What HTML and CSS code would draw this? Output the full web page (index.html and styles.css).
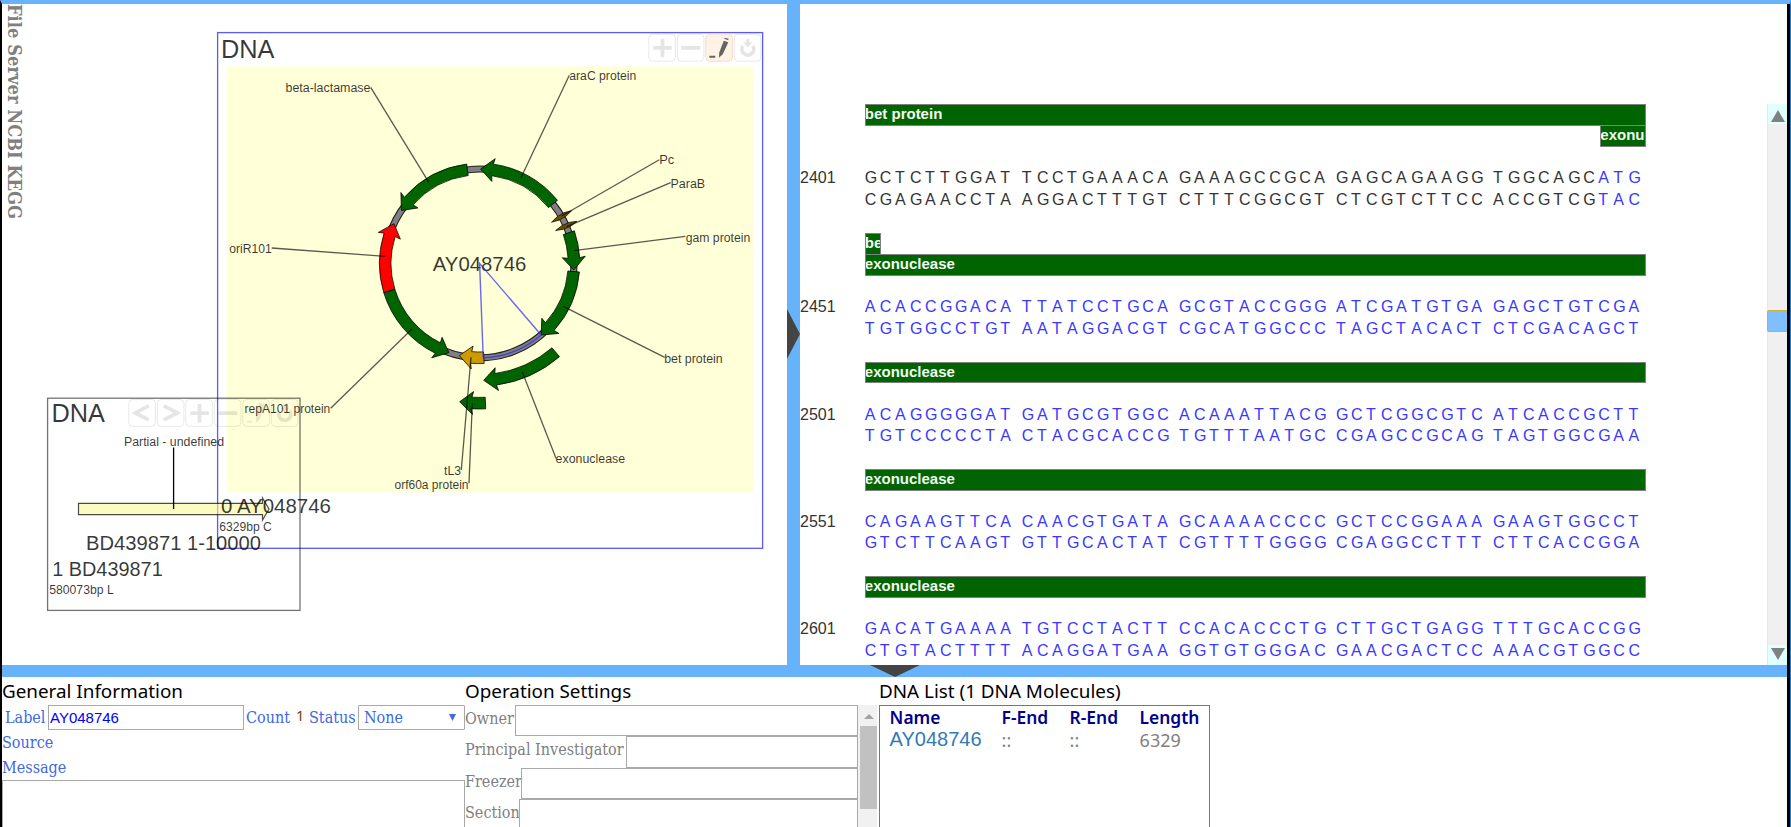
FILE: index.html
```html
<!DOCTYPE html>
<html lang="en">
<head>
<meta charset="utf-8">
<title>DNA Editor</title>
<link rel="stylesheet" href="styles.css">
</head>
<body>
<div class="app">
  <div class="workspace">
    <section class="map-pane">
      <nav class="side-tabs">File Server NCBI KEGG</nav>
      <svg class="map" id="map" width="785" height="661" viewBox="2 4 785 661"></svg>
    </section>
    <div class="split-v"><svg width="13" height="50" viewBox="0 0 13 50"><path d="M0 0L13 25L0 50Z"/></svg></div>
    <section class="seq-pane">
      <div class="seq" id="seq"></div>
      <div class="scroll">
        <div class="scroll-btn up"><svg width="14" height="12" viewBox="0 0 14 12"><path d="M7 0L14 12H0Z"/></svg></div>
        <div class="scroll-track"><div class="scroll-thumb"></div></div>
        <div class="scroll-btn down"><svg width="14" height="12" viewBox="0 0 14 12"><path d="M7 12L14 0H0Z"/></svg></div>
      </div>
    </section>
  </div>
  <div class="split-h"><svg width="50" height="12" viewBox="0 0 50 12"><path d="M0 0H50L25 12Z"/></svg></div>
  <div class="details">
    <section class="general">
      <h2 class="title">General Information</h2>
      <div class="general-row">
        <span class="blue label-name">Label</span>
        <div class="label-input">AY048746</div>
        <span class="blue count-name">Count</span>
        <span class="count">1</span>
        <span class="blue status-name">Status</span>
        <div class="select"><span class="blue">None</span><svg width="7" height="7" viewBox="0 0 8 8"><path d="M0 0H8L4 8Z"/></svg></div>
      </div>
      <div class="blue source">Source</div>
      <div class="blue message">Message</div>
      <div class="message-box"></div>
    </section>
    <section class="operation">
      <h2 class="title op-title">Operation Settings</h2>
      <div class="op-body">
        <div class="op-fields">
          <div class="field"><span class="owner">Owner</span><div class="input"></div></div>
          <div class="field"><span class="pi">Principal Investigator</span><div class="input"></div></div>
          <div class="field"><span class="freezer">Freezer</span><div class="input"></div></div>
          <div class="field"><span class="section-name">Section</span><div class="input"></div></div>
        </div>
        <div class="op-scroll"><svg width="10" height="5" viewBox="0 0 10 5"><path d="M5 0L10 5H0Z"/></svg><div class="op-thumb"></div></div>
      </div>
    </section>
    <section class="list">
      <h2 class="title list-title">DNA List (1 DNA Molecules)</h2>
      <div class="list-box">
        <div class="list-head"><b>Name</b><b>F-End</b><b>R-End</b><b>Length</b></div>
        <div class="list-row"><span class="link">AY048746</span><span>::</span><span>::</span><span>6329</span></div>
      </div>
    </section>
  </div>
</div>
<script src="app.js"></script>
</body>
</html>
```
FILE: styles.css
```css
* { box-sizing: border-box; }
body { margin: 0; background: #fff; font-family: "Liberation Sans", Arial, sans-serif; }
.app { width: 1791px; height: 827px; overflow: hidden; display: flex; flex-direction: column; border-left: 2px solid #000; border-right: 1px solid #1f7fd0; border-top: 4px solid #66b3fb; position: relative; }
.app::after { content: ""; position: absolute; right: 0; top: -4px; width: 3px; height: 827px; background: #000; }
.workspace { display: flex; height: 661px; flex: none; }
.map-pane { width: 785px; display: grid; flex: none; }
.side-tabs { grid-area: 1 / 1; justify-self: start; writing-mode: vertical-rl; font: bold 18.2px/18px "DejaVu Serif", serif; font-stretch: condensed; color: #808080; padding-left: 3px; white-space: nowrap; }
.map { grid-area: 1 / 1; display: block; }
.split-v { width: 13px; background: #66b3fb; padding-top: 305px; flex: none; }
.split-v svg, .split-h svg { display: block; fill: #444; }
.split-h { height: 12px; flex: none; background: #66b3fb; padding-left: 868px; }

/* plasmid map */
.map text { font-family: "Liberation Sans", Arial, sans-serif; fill: #000; fill-opacity: .78; }
.t12 { font-size: 12px; }
.t20 { font-size: 20px; }
.t25 { font-size: 25px; }
.lead { stroke: #000; stroke-opacity: .65; stroke-width: 1.3; fill: none; }
.lead.dark { stroke-opacity: 1; }
.gene { stroke: #000; stroke-opacity: .75; stroke-width: 1; stroke-linejoin: miter; }
.sel { stroke: #2828ff; stroke-opacity: .7; stroke-width: 1.4; fill: none; }
.frame1 { fill: none; stroke: #00f; stroke-opacity: .65; stroke-width: 1.3; }
.frame2 { fill: none; stroke: #000; stroke-opacity: .55; stroke-width: 1.3; }
.btn { fill: none; stroke: #000; stroke-opacity: .09; }
.glyph { fill: none; stroke: #000; stroke-opacity: .1; stroke-width: 3.8; }
.edit-bg { fill: #fff3e6; stroke: #f8dccb; }

/* sequence */
.seq-pane { width: 987px; flex: none; padding-top: 100px; overflow: hidden; display: flex; justify-content: space-between; }
.seq { width: 850px; height: 561px; overflow: hidden; }
.block { display: flex; flex-direction: column; height: 107.35px; }
.block.two { height: 128.8px; }
.lane { height: 21.47px; flex: none; display: flex; padding-left: 64.6px; }
.lane.gap { display: block; }
.bar { height: 21.9px; background: #006400; border: 1px solid #808080; color: #f4f8f4; font: bold 15px/17px "Liberation Sans", Arial, sans-serif; text-indent: -.8px; overflow: hidden; white-space: nowrap; }
.bar.full { width: 781.5px; }
.bar.start { width: 16px; }
.bar.end { width: 46px; margin-left: 735.5px; }
.line { height: 21.47px; flex: none; display: flex; font-size: 16px; line-height: 20.6px; color: #333; }
.num { width: 65px; }
.group { display: flex; width: 157.6px; }
.group i { font-style: normal; width: 15.05px; flex: none; }
.line .hot { color: #3838ff; }
.scroll { width: 20px; height: 561px; display: flex; flex-direction: column; border-left: 1px solid #dfe8ff; background: #f0f0f0; }
.scroll-btn { height: 20px; background: #e0ffff; display: flex; justify-content: center; flex: none; padding-left: 1px; }
.scroll-btn.up { padding-top: 6px; }
.scroll-btn.down { padding-top: 3px; }
.scroll-btn svg { fill: #808080; }
.scroll-track { flex: 1; padding-top: 186px; }
.scroll-thumb { height: 22px; background: #80bfff; border: 1px solid #d4af37; border-radius: 2px; margin: 0 -1px; }

/* details */
.details { display: flex; height: 150px; flex: none; }
.title { margin: 0; font: 400 18.85px/28px "Noto Sans", sans-serif; height: 28px; color: #000; white-space: nowrap; }
.blue { color: #4169e1; font: 16px/25px "DejaVu Serif", serif; font-stretch: condensed; white-space: nowrap; }
.general { width: 463px; flex: none; }
.general-row { display: flex; height: 25px; }
.label-name { width: 46px; padding-left: 3px; }
.label-input { width: 196px; border: 1px solid #a9a9a9; color: #00f; font-size: 15px; line-height: 23px; padding-left: 1px; }
.count-name { width: 50px; padding-left: 2px; }
.count { width: 14px; padding-left: 2px; font: 14.5px/20px "Noto Sans", sans-serif; color: #6b3e00; }
.status-name { width: 50px; padding-left: 1px; }
.select { flex: 1; border: 1px solid #a9a9a9; display: flex; justify-content: space-between; align-items: center; padding: 0 8px 0 5px; border-radius: 1px; }
.select svg { fill: #4169e1; }
.source { height: 25px; line-height: 26px; }
.message { height: 25px; line-height: 26px; }
.message-box { height: 60px; border: 1px solid #a9a9a9; }
.operation { width: 414px; flex: none; }
.op-body { display: flex; width: 412px; height: 122px; overflow: hidden; }
.op-fields { width: 393px; }
.field { height: 31.4px; display: flex; color: #808080; font: 16px/27px "DejaVu Serif", serif; font-stretch: condensed; white-space: nowrap; }
.field span { flex: none; }
.owner { width: 50px; }
.pi { width: 161px; }
.freezer { width: 56px; }
.section-name { width: 54px; }
.input { flex: 1; border: 1px solid #a9a9a9; }
.op-scroll { width: 19px; background: #f1f1f1; display: flex; flex-direction: column; align-items: center; padding: 9px 0 0 2px; }
.op-scroll svg { fill: #a3a3a3; flex: none; }
.op-thumb { width: 17px; height: 83px; background: #c1c1c1; margin-top: 7px; flex: none; }
.list-box { width: 331px; height: 130px; border: 1px solid #777; padding: 0 10px 0 9.6px; }
.list-head, .list-row { display: grid; grid-template-columns: 112px 68px 70px 60px; height: 22px; white-space: nowrap; }
.list-head { color: #00008b; font: bold 17.4px/23px "Noto Sans", sans-serif; }
.list-head b { font-weight: 600; }
.list-row { color: #808080; font: 18px/24px "Noto Sans", sans-serif; }
.link { color: #337ab7; font: 20px/22px "Liberation Sans", Arial, sans-serif; }
```
FILE: app.js
```js
// Plasmid map
const CX = 479.6, CY = 263.4, R = 94.4;
function pt(deg, r) {
  const a = deg * Math.PI / 180;
  return (CX + r * Math.sin(a)).toFixed(2) + ' ' + (CY - r * Math.cos(a)).toFixed(2);
}
// Arrow along a circle from angle "from" to angle "to" (degrees clockwise from the top)
function arrow(from, to, r, fill) {
  const dir = Math.sign(to - from), neck = to - dir * 12 / r * 57.3, barb = neck - dir * .6;
  const cw = dir > 0 ? 1 : 0, o = r + 5.8, i = r - 5.8;
  return `<path class="gene" fill="${fill}" d="M${pt(from, o)}A${o} ${o} 0 0 ${cw} ${pt(neck, o)}L${pt(barb, r + 11.5)}L${pt(to, r)}L${pt(barb, r - 11.5)}L${pt(neck, i)}A${i} ${i} 0 0 ${1 - cw} ${pt(from, i)}Z"/>`;
}
function text(s, x, y, w, cls) {
  return `<text class="${cls}" x="${x}" y="${y}" textLength="${w}" lengthAdjust="spacingAndGlyphs">${s}</text>`;
}
function line(x1, y1, x2, y2) {
  return `<path class="lead" d="M${x1} ${y1}L${x2} ${y2}"/>`;
}
const ICONS = {
  prev: '<path class="glyph" d="M20 6.5L6.5 13.5L20 20.5"/>',
  next: '<path class="glyph" d="M6.5 6.5L20 13.5L6.5 20.5"/>',
  plus: '<path class="glyph" d="M4.5 13.7H23M13.7 4.5V23"/>',
  minus: '<path class="glyph" d="M4 13.7H23"/>',
  edit: '<path fill="#000" fill-opacity=".09" d="M4 21.5h5v1.5h-5zM16 3l6 2-5 15-3.5 3-.5-5z"/>',
  editOn: '<path fill="#666" d="M3.5 21.5h6v2h-6zM18 6.5l4.500 1.5-5.5 12-4 3.5.5-5.5zM18.8 3.5l4 1-.4 1.5-4-1.5z"/>',
  power: '<path class="glyph" d="M8.5 11.5A6 6 0 1 0 18.5 11.5"/><path fill="#000" fill-opacity=".1" d="M12 4.5h3v3.5h3.2l-4.7 5-4.7-5h3.2z"/>'
};
function buttons(names, x, y) {
  return names.map((n, k) => `<g transform="translate(${x + k * 28.5} ${y})"><rect class="${n === 'editOn' ? 'edit-bg' : 'btn'}" width="26.6" height="27" rx="4"/>${ICONS[n]}</g>`).join('');
}
const G = '#006400';
let m = '<rect x="226.6" y="66.4" width="526.7" height="426" fill="#ffffd8"/>';
m += '<rect class="frame1" x="217.6" y="32.6" width="545" height="515.7"/>';
m += text('DNA', 221, 57.6, 53.5, 't25');
m += buttons(['plus', 'minus', 'editOn', 'power'], 648.8, 34.2);
m += `<circle cx="${CX}" cy="${CY}" r="${R}" fill="none" stroke="#222" stroke-width="7.2"/><circle cx="${CX}" cy="${CY}" r="${R}" fill="none" stroke="#808080" stroke-width="5"/>`;
m += arrow(51, .6, R, G) + arrow(-7.4, -55.9, R, G) + arrow(-107, -65.1, R, '#f00');
m += arrow(253, 199, R, G) + arrow(71, 94, R, G) + arrow(94.9, 139.3, R, G);
m += arrow(177.4, 192.4, R, '#cd9b00') + arrow(139.4, 178, 117, G) + arrow(177.6, 188.2, 139.8, G);
[[60.2, 11.5], [66.6, 11.5]].forEach(([a, h]) => {
  m += `<path d="M${pt(a, R - h)}L${pt(a - 1.2, R - 4)}L${pt(a - 1.2, R + 4)}L${pt(a, R + h)}L${pt(a + 1.2, R + 4)}L${pt(a + 1.2, R - 4)}Z" fill="#6b4e00" stroke="#111" stroke-width=".8"/>`;
});
m += text('AY048746', 432.8, 270.6, 93.5, 't20');
m += `<path class="sel" d="M${CX} ${CY}L${pt(177.8, R)}A${R} ${R} 0 0 0 ${pt(139.3, R)}Z"/>`;
m += line(370.7, 87.3, 429, 182.7) + line(569.3, 75.3, 521, 177.7) + line(659.3, 159.7, 561.7, 216);
m += line(670.7, 182.7, 566.7, 226.7) + line(685.3, 236.3, 574, 250.7) + line(664.7, 357.3, 563.3, 306.3);
m += line(556, 458.3, 522.3, 372) + line(330.7, 408.3, 412, 329) + line(461.3, 470, 471, 357.3);
m += line(469, 483.3, 472.3, 403.3) + line(271.7, 248, 385.3, 256.3);
[['beta-lactamase', 285.5, 91.8, 85], ['araC protein', 569.3, 80.4, 67], ['Pc', 659.3, 164, 15], ['ParaB', 670.6, 187.5, 34.5],
 ['gam protein', 685.7, 241.5, 64.5], ['bet protein', 664.2, 362.5, 58.5], ['exonuclease', 555.6, 462.5, 69.5], ['repA101 protein', 244.5, 412.5, 85.8],
 ['tL3', 444, 475.3, 17], ['orf60a protein', 394.5, 489, 74], ['oriR101', 229.3, 252.5, 42.5], ['6329bp C', 219.3, 530.5, 52.5],
 ['Partial - undefined', 124, 446, 100], ['580073bp L', 49.2, 593.5, 64.5]].forEach(l => { m += text(...l, 't12'); });
m += '<path d="M78.5 503.4H262.5V498L269 509L262.5 520V514.6H78.5Z" fill="#fafa96" fill-opacity=".6" stroke="#000" stroke-opacity=".7" stroke-width="1.2"/>';
m += '<rect class="frame2" x="47.6" y="398.2" width="252.4" height="212.2"/>';
m += '<path class="lead dark" d="M173.6 447.5V509"/>';
m += buttons(['prev', 'next', 'plus', 'minus', 'edit', 'power'], 128.8, 399.4);
m += text('DNA', 51.5, 422.3, 53.5, 't25') + text('0 AY048746', 221, 513.4, 110, 't20');
m += text('BD439871 1-10000', 86, 549.6, 175, 't20') + text('1 BD439871', 52.2, 575.6, 110.5, 't20');
document.getElementById('map').innerHTML = m;

// Sequence blocks: position, feature bars, upper strand; the lower strand is its complement
const BLOCKS = [
  [2401, [['full', 'bet protein'], ['end', 'exonuclease']], 'GCTCTTGGAT TCCTGAAACA GAAAGCCGCA GAGCAGAAGG TGGCAGCATG', 47],
  [2451, [['start', 'bet protein'], ['full', 'exonuclease']], 'ACACCGGACA TTATCCTGCA GCGTACCGGG ATCGATGTGA GAGCTGTCGA', 0],
  [2501, [['full', 'exonuclease']], 'ACAGGGGGAT GATGCGTGGC ACAAATTACG GCTCGGCGTC ATCACCGCTT', 0],
  [2551, [['full', 'exonuclease']], 'CAGAAGTTCA CAACGTGATA GCAAAACCCC GCTCCGGAAA GAAGTGGCCT', 0],
  [2601, [['full', 'exonuclease']], 'GACATGAAAA TGTCCTACTT CCACACCCTG CTTGCTGAGG TTTGCACCGG', 0]
];
const PAIR = { A: 'T', T: 'A', G: 'C', C: 'G' };
function strand(groups, hotFrom, map) {
  let n = 0;
  return groups.map(g => '<span class="group">' + [...g].map(c => `<i${n++ >= hotFrom ? ' class="hot"' : ''}>${map ? map[c] : c}</i>`).join('') + '</span>').join('');
}
document.getElementById('seq').innerHTML = BLOCKS.map(([pos, bars, s, hot]) => {
  const g = s.split(' ');
  return `<div class="block${bars.length > 1 ? ' two' : ''}">` +
    bars.map(([k, t]) => `<div class="lane"><div class="bar ${k}">${t}</div></div>`).join('') +
    `<div class="lane gap"></div><div class="line"><span class="num">${pos}</span>${strand(g, hot)}</div>` +
    `<div class="line"><span class="num"></span>${strand(g, hot, PAIR)}</div></div>`;
}).join('');
```
